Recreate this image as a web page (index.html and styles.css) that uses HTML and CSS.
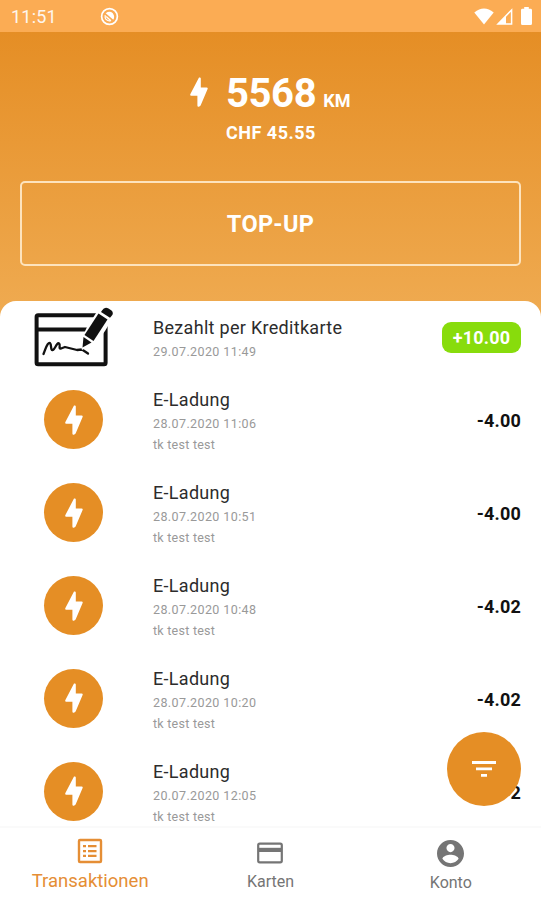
FILE: index.html
```html
<!DOCTYPE html>
<html lang="de">
<head>
  <meta charset="UTF-8">
  <meta name="viewport" content="width=device-width, initial-scale=1.0">
  <title>Transaktionen</title>
  <link rel="stylesheet" href="styles.css">
</head>
<body>
  <!-- Shared icons -->
  <svg class="sprite" aria-hidden="true">
    <symbol id="bolt" viewBox="0 0 18 30">
      <path d="M9 .5 Q10.800 0 10.800 1.600 V10.600 H16.600 Q18.300 10.700 17.500 12.200 L10.600 28.600 Q9.600 30 8.400 29.700 Q7.400 29.500 7.400 28.400 V18.800 H1.200 Q-.3 18.600 .4 17 Z"/>
    </symbol>
  </svg>

  <div class="app">
    <header class="status">
      <span class="clock">11:51</span>
      <svg class="status-app" viewBox="0 0 20 20">
        <circle cx="10" cy="10" r="8.3" fill="none" stroke="#fff" stroke-width="1.8"/>
        <path d="M6 6.500 Q10 3.500 13.500 6.500 Q16 10 14 13.500 Z" fill="#fff"/>
        <path d="M5.500 8.500 Q4.500 14.500 11 15 M6.500 10 L11.500 14.500" fill="none" stroke="#fff" stroke-width="1.300"/>
      </svg>
      <div class="status-right">
        <svg width="20" height="17" viewBox="0 0 20 17"><path fill="#fff" d="M10 16.5 L.3 4.6 Q10 -3.4 19.7 4.6 Z"/></svg>
        <svg width="17" height="17" viewBox="0 0 17 17"><path fill="none" stroke="#fff" stroke-width="1.5" d="M2 15.9 H15.6 V2 Z"/><path fill="#fff" d="M2 16 L10 8 V16 Z"/></svg>
        <svg class="battery" width="11" height="18" viewBox="0 0 11 18"><path fill="#fff" d="M3.2 0 H7.8 V1.8 H9.6 Q11 1.8 11 3.2 V16.5 Q11 18 9.6 18 H1.4 Q0 18 0 16.5 V3.2 Q0 1.8 1.4 1.8 H3.2 Z"/></svg>
      </div>
    </header>

    <section class="balance">
      <div class="balance-info">
        <svg class="balance-bolt"><use href="#bolt"/></svg>
        <div>
          <div class="range"><span class="range-value">5568</span><span class="range-unit">KM</span></div>
          <div class="money">CHF 45.55</div>
        </div>
      </div>
      <button class="topup">TOP-UP</button>
    </section>

    <main class="list">
      <div class="row row-short">
        <div class="row-icon">
          <svg class="card-sign" width="80" height="60" viewBox="0 0 80 60">
            <rect x="2.6" y="8.2" width="69" height="49" rx="1.5" fill="none" stroke="#111" stroke-width="4"/>
            <path d="M2 22.5 H60" stroke="#111" stroke-width="4"/>
            <path d="M9.5 47 C12 41 13 36 15.5 36 C18 36 16 44 19 43 C21 42 23 35 25 36.500 C27 38 24 42 27 41.500 L31 40 L37 41.500 L43 43 L48 42.500 L54 46.500" fill="none" stroke="#111" stroke-width="2.300" stroke-linejoin="round" stroke-linecap="round"/>
            <path d="M66 0 L80 0 L80 9 L71 24 L63 35 L48 43 L46 35 L53 20 Z" fill="#fff"/>
            <path d="M64.500 6.500 L73.500 12.500 L59.500 34 L50.500 28 Z" fill="#111"/>
            <path d="M49.500 30 L57.500 35.500 L48.500 40.500 Z" fill="#111"/>
            <path d="M68 3.500 Q70.500 -.5 74.500 1.500 L77.500 3.500 Q80.200 6 77.500 9 L76 10.800 L67 5 Z" fill="#111"/>
          </svg>
        </div>
        <div class="row-text">
          <div class="title">Bezahlt per Kreditkarte</div>
          <div class="sub">29.07.2020 11:49</div>
        </div>
        <div class="amount amount-plus">+10.00</div>
      </div>

      <div class="row">
        <div class="row-icon"><span class="circle"><svg class="circle-bolt"><use href="#bolt"/></svg></span></div>
        <div class="row-text">
          <div class="title">E-Ladung</div>
          <div class="sub">28.07.2020 11:06</div>
          <div class="sub note">tk test test</div>
        </div>
        <div class="amount">-4.00</div>
      </div>

      <div class="row">
        <div class="row-icon"><span class="circle"><svg class="circle-bolt"><use href="#bolt"/></svg></span></div>
        <div class="row-text">
          <div class="title">E-Ladung</div>
          <div class="sub">28.07.2020 10:51</div>
          <div class="sub note">tk test test</div>
        </div>
        <div class="amount">-4.00</div>
      </div>

      <div class="row">
        <div class="row-icon"><span class="circle"><svg class="circle-bolt"><use href="#bolt"/></svg></span></div>
        <div class="row-text">
          <div class="title">E-Ladung</div>
          <div class="sub">28.07.2020 10:48</div>
          <div class="sub note">tk test test</div>
        </div>
        <div class="amount">-4.02</div>
      </div>

      <div class="row">
        <div class="row-icon"><span class="circle"><svg class="circle-bolt"><use href="#bolt"/></svg></span></div>
        <div class="row-text">
          <div class="title">E-Ladung</div>
          <div class="sub">28.07.2020 10:20</div>
          <div class="sub note">tk test test</div>
        </div>
        <div class="amount">-4.02</div>
      </div>

      <div class="row">
        <div class="row-icon"><span class="circle"><svg class="circle-bolt"><use href="#bolt"/></svg></span></div>
        <div class="row-text">
          <div class="title">E-Ladung</div>
          <div class="sub">20.07.2020 12:05</div>
          <div class="sub note">tk test test</div>
        </div>
        <div class="amount">2</div>
      </div>

      <!-- Filter button, floats over the list -->
      <button class="fab" aria-label="Filter">
        <svg width="26" height="18" viewBox="0 0 26 18"><path fill="#fff" d="M1 1 H25 V4 H1 Z M5 7.500 H21 V10.300 H5 Z M10 14 H16 V16.700 H10 Z"/></svg>
      </button>
    </main>

    <nav class="tabs">
      <a class="tab tab-active">
        <svg width="26" height="26" viewBox="0 0 26 26">
          <rect x="2" y="2" width="22" height="22" rx="1" fill="none" stroke="currentColor" stroke-width="2.400"/>
          <path fill="currentColor" d="M6 7 H9 V9.300 H6 Z M11 7 H19.500 V9.300 H11 Z M6 11.900 H9 V14.200 H6 Z M11 11.900 H19.500 V14.200 H11 Z M6 16.800 H9 V19.100 H6 Z M11 16.800 H19.500 V19.100 H11 Z"/>
        </svg>
        <span>Transaktionen</span>
      </a>
      <a class="tab">
        <svg width="28" height="26" viewBox="0 0 28 26">
          <rect x="2.200" y="3.700" width="23.600" height="18.600" rx="1.500" fill="none" stroke="currentColor" stroke-width="2.200"/>
          <path fill="currentColor" d="M2 7.800 H26 V12 H2 Z"/>
        </svg>
        <span>Karten</span>
      </a>
      <a class="tab">
        <svg width="27" height="27" viewBox="2 2 20 20">
          <path fill="currentColor" d="M12 2C6.480 2 2 6.480 2 12s4.480 10 10 10 10-4.480 10-10S17.520 2 12 2zm0 3c1.660 0 3 1.340 3 3s-1.340 3-3 3-3-1.340-3-3 1.340-3 3-3zm0 14.200c-2.500 0-4.710-1.280-6-3.220.03-1.990 4-3.080 6-3.080 1.990 0 5.970 1.090 6 3.080-1.290 1.940-3.500 3.220-6 3.220z"/>
        </svg>
        <span>Konto</span>
      </a>
    </nav>
  </div>
</body>
</html>
```

FILE: styles.css
```css
* {
  box-sizing: border-box;
}
body {
  margin: 0;
  font-family: Roboto, "Liberation Sans", sans-serif;
  background: #fff;
}
button {
  font-family: inherit;
  padding: 0;
}
.sprite {
  display: none;
}
.app {
  display: flex;
  flex-direction: column;
  height: 900px;
  overflow: hidden;
  background: linear-gradient(#e58e25 32px, #efaa50 310px);
}

/* Status bar */
.status {
  display: flex;
  align-items: center;
  flex: none;
  height: 32px;
  padding: 0 9px 0 11px;
  background: #fbac54;
  color: #fff;
}
.clock {
  width: 89px;
  font-size: 18px;
  line-height: 32px;
  padding-top: 2px;
  letter-spacing: 0.2px;
  opacity: 0.9;
}
.status-app {
  width: 19px;
  height: 19px;
}
.status-right {
  display: flex;
  align-items: center;
  gap: 2px;
  margin-left: auto;
}
.battery {
  margin-left: 6px;
}

/* Balance */
.balance {
  display: flex;
  flex-direction: column;
  flex: none;
  height: 269px;
  padding: 38px 20px 0;
  color: #fff;
}
.balance-info {
  display: flex;
  height: 111px;
  padding-left: 170px;
  font-weight: bold;
}
.balance-bolt {
  width: 18px;
  height: 30px;
  margin: 7px 18px 0 0;
  fill: #fff;
}
.range {
  display: flex;
  align-items: baseline;
  gap: 7px;
  line-height: 48px;
}
.range-value {
  font-size: 40px;
  letter-spacing: -0.4px;
}
.range-unit {
  font-size: 18px;
}
.money {
  font-size: 18px;
  line-height: 28px;
  margin-top: -6px;
  letter-spacing: 0.5px;
}
.topup {
  height: 85px;
  border: 2px solid #fde3bd;
  border-radius: 5px;
  background: none;
  color: #fff;
  font-size: 23.5px;
  font-weight: bold;
  letter-spacing: 0.3px;
}

/* Transactions */
.list {
  position: relative;
  flex: none;
  height: 525px;
  background: #fff;
  border-radius: 16px 16px 0 0;
}
.row {
  display: flex;
  align-items: center;
  height: 92.8px;
  padding-right: 20px;
}
.row-short {
  height: 72.6px;
}
.row-icon {
  display: flex;
  justify-content: center;
  width: 147px;
  margin-right: 6px;
}
.circle {
  display: flex;
  align-items: center;
  justify-content: center;
  width: 59px;
  height: 59px;
  border-radius: 50%;
  background: #e58e25;
}
.circle-bolt {
  width: 18px;
  height: 30px;
  fill: #fff;
}
.row-text {
  flex: 1;
  padding-top: 3px;
}
.title {
  font-size: 18px;
  line-height: 26px;
  letter-spacing: 0.3px;
  color: #2c2c2c;
}
.sub {
  font-size: 12.5px;
  line-height: 21px;
  letter-spacing: 0.4px;
  color: #999;
}
.note {
  letter-spacing: 0.25px;
}
.amount {
  padding-top: 2px;
  font-size: 18px;
  font-weight: bold;
  letter-spacing: 0.2px;
  color: #111;
}
.amount-plus {
  width: 79px;
  height: 31px;
  padding-top: 0;
  border-radius: 9px;
  background: #88dc0c;
  color: #fff;
  line-height: 32px;
  text-align: center;
}
.fab {
  position: absolute;
  right: 20px;
  bottom: 20px;
  display: flex;
  align-items: center;
  justify-content: center;
  width: 74px;
  height: 74px;
  border: 0;
  border-radius: 50%;
  background: #e58e25;
}

/* Bottom navigation */
.tabs {
  display: grid;
  grid-template-columns: repeat(3, 1fr);
  flex: 1;
  position: relative;
  background: #fff;
  border-top: 2px solid #fafafa;
}
.tab {
  display: flex;
  flex-direction: column;
  align-items: center;
  padding-top: 12px;
  color: #757575;
  font-size: 16px;
}
.tab span {
  line-height: 32px;
}
.tab-active {
  padding-top: 10px;
  color: #e58e35;
  font-size: 18.5px;
}
.tab-active span {
  line-height: 35px;
}
```
